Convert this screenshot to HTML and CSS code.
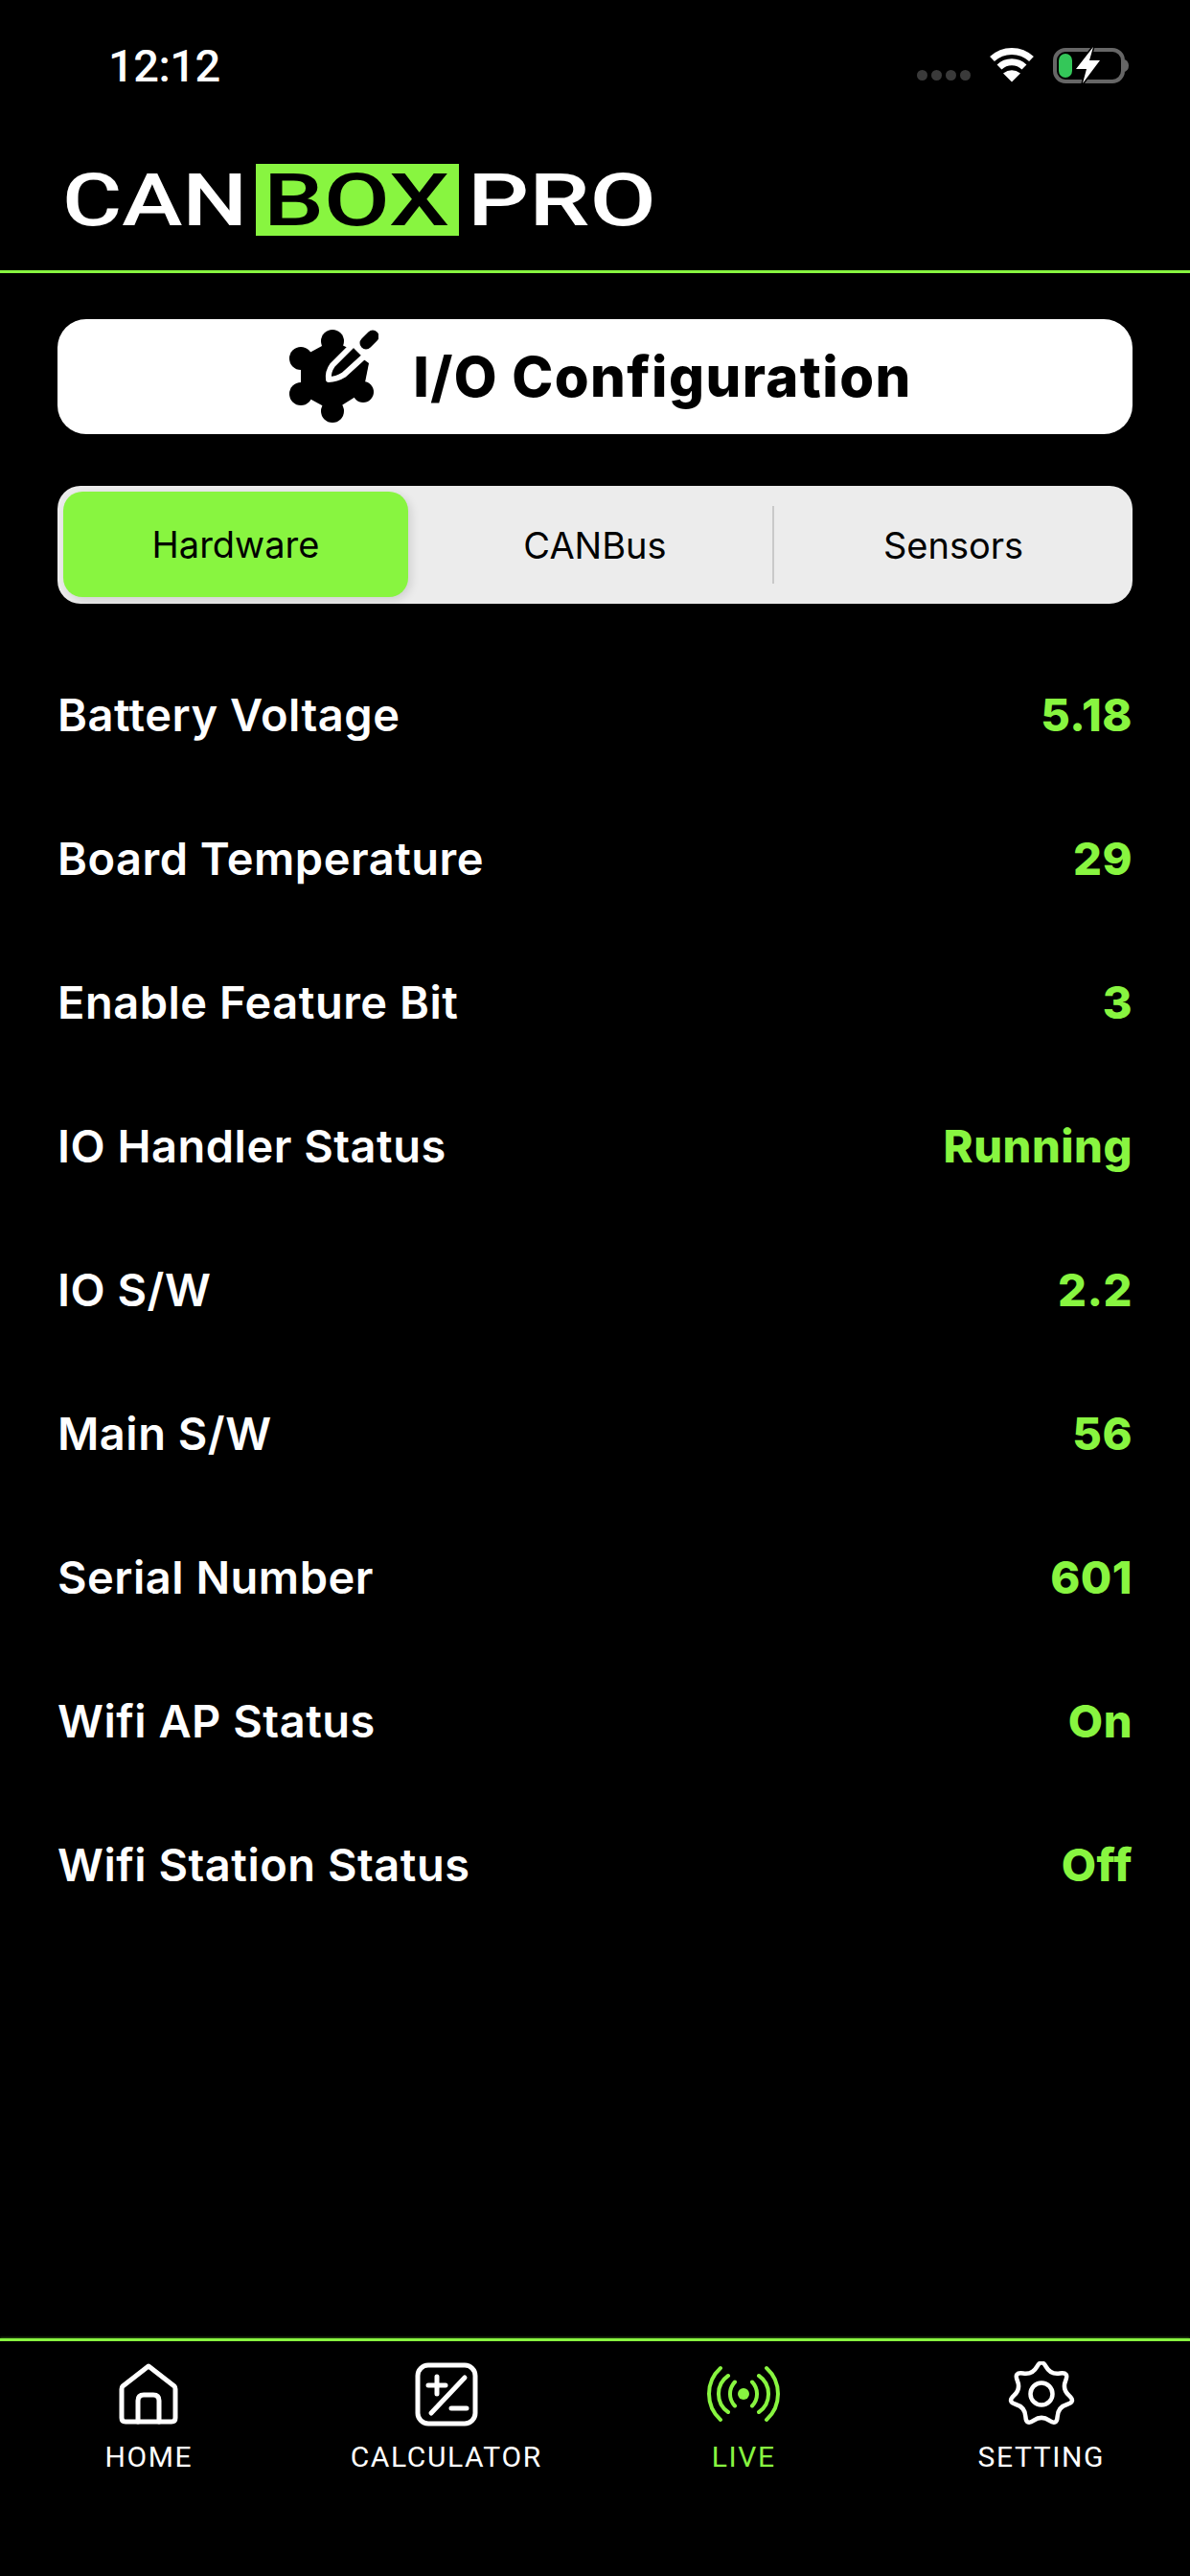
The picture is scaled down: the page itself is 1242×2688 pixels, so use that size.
FILE: index.html
```html
<!DOCTYPE html>
<html lang="en">
<head>
<meta charset="utf-8">
<title>CANBOX PRO</title>
<link rel="stylesheet" href="styles.css">
</head>
<body>
<div class="page">
  <div class="status">
    <span class="time">12:12</span>
    <div class="status-icons">
      <div class="dots"><i></i><i></i><i></i><i></i></div>
      <svg class="wifi" width="48" height="38" viewBox="0 0 48 38">
        <path d="M3.500 13.500A30 30 0 0 1 44.500 13.500M11 22A18.500 18.500 0 0 1 37 22" fill="none" stroke="#fff" stroke-width="7"/>
        <path d="M24 37.500L15 28.500Q24 22 33 28.500Z" fill="#fff"/>
      </svg>
      <svg class="battery" width="80" height="40" viewBox="0 0 80 40">
        <rect x="2" y="4" width="71" height="33" rx="11" fill="none" stroke="#666" stroke-width="4"/>
        <path d="M75 14Q79 16 79 20.500Q79 25 75 27Z" fill="#666"/>
        <rect x="6" y="8" width="14" height="25" rx="7" fill="#34c759"/>
        <polygon points="42,1 24,24 35,24 31,39 49,15 38,15" fill="#fff" stroke="#000" stroke-width="3" paint-order="stroke" stroke-linejoin="round"/>
      </svg>
    </div>
  </div>

  <header class="brand">
    <svg class="logo" width="630" height="100" viewBox="0 0 630 100">
      <rect x="199" y="12" width="212" height="75" fill="#88f540"/>
      <text class="logo-text" x="-3" y="76" textLength="193" lengthAdjust="spacingAndGlyphs" fill="#fff">CAN</text>
      <text class="logo-text" x="207" y="76" textLength="194" lengthAdjust="spacingAndGlyphs" fill="#000">BOX</text>
      <text class="logo-text" x="420" y="76" textLength="197" lengthAdjust="spacingAndGlyphs" fill="#fff">PRO</text>
    </svg>
  </header>

  <main class="content">
    <div class="title-card">
      <svg class="title-icon" width="96" height="104" viewBox="0 0 96 104">
        <g fill="#000">
          <polygon points="48,14 64,22 86,38 80,68 48,88 15,70 15,32"/>
          <circle cx="48" cy="15" r="12"/>
          <circle cx="15" cy="33" r="12"/>
          <circle cx="15" cy="70" r="12"/>
          <circle cx="48" cy="88" r="12"/>
          <circle cx="80" cy="68" r="11"/>
        </g>
        <path d="M66 8L96 38L96 0Z" fill="#fff"/>
        <path d="M70 18L82 30L60 50Q52 55 44 55Q43 47 48 40Z" fill="#000" stroke="#fff" stroke-width="6" stroke-linejoin="round"/>
        <path d="M83 17L90 10" stroke="#000" stroke-width="13" stroke-linecap="round"/>
      </svg>
      <span class="title-text">I/O Configuration</span>
    </div>

    <div class="segments">
      <div class="segment segment-on"><span class="segment-pill">Hardware</span></div>
      <div class="segment segment-rule"><span>CANBus</span></div>
      <div class="segment"><span>Sensors</span></div>
    </div>

    <div class="rows">
      <div class="row"><span class="row-label">Battery Voltage</span><span class="row-value">5.18</span></div>
      <div class="row"><span class="row-label">Board Temperature</span><span class="row-value">29</span></div>
      <div class="row"><span class="row-label">Enable Feature Bit</span><span class="row-value">3</span></div>
      <div class="row"><span class="row-label">IO Handler Status</span><span class="row-value">Running</span></div>
      <div class="row"><span class="row-label">IO S/W</span><span class="row-value">2.2</span></div>
      <div class="row"><span class="row-label">Main S/W</span><span class="row-value">56</span></div>
      <div class="row"><span class="row-label">Serial Number</span><span class="row-value">601</span></div>
      <div class="row"><span class="row-label">Wifi AP Status</span><span class="row-value">On</span></div>
      <div class="row"><span class="row-label">Wifi Station Status</span><span class="row-value">Off</span></div>
    </div>
  </main>

  <nav class="tabs">
    <div class="tab">
      <svg class="tab-icon" width="84" height="68" viewBox="0 0 84 68" fill="none" stroke="#fff" stroke-width="5" stroke-linejoin="round" stroke-linecap="round">
        <path d="M42 5L69 26Q70 27 70 29V59Q70 63 66 63H18Q14 63 14 59V29Q14 27 15 26Z"/>
        <path d="M31 63V41Q31 35 37 35H47Q53 35 53 41V63"/>
      </svg>
      <span>HOME</span>
    </div>
    <div class="tab">
      <svg class="tab-icon" width="84" height="68" viewBox="0 0 84 68" fill="none" stroke="#fff" stroke-width="5" stroke-linecap="round">
        <rect x="12" y="4" width="60" height="61" rx="11"/>
        <path d="M23 25H41M32 16V34M26 54L61 17M47 49H63"/>
      </svg>
      <span>CALCULATOR</span>
    </div>
    <div class="tab tab-on">
      <svg class="tab-icon" width="84" height="68" viewBox="0 0 84 68" fill="none" stroke="#88f540" stroke-width="4" stroke-linecap="round">
        <circle cx="42" cy="34" r="6" fill="#88f540" stroke="none"/>
        <path d="M18 7A36.400 36.400 0 0 0 18 61M66 7A36.400 36.400 0 0 1 66 61"/>
        <path d="M26 15A23 23 0 0 0 26 53M58 15A23 23 0 0 1 58 53"/>
        <path d="M33 21.500A18 18 0 0 0 33 46.500M51 21.500A18 18 0 0 1 51 46.500"/>
      </svg>
      <span>LIVE</span>
    </div>
    <div class="tab">
      <svg class="tab-icon" width="84" height="68" viewBox="-8 0 84 68" fill="none" stroke="#fff" stroke-width="4.500" stroke-linejoin="round">
        <path d="M29.230 5.590Q34 -3 38.780 5.590Q43.550 14.180 53.240 12.560Q62.930 10.930 59.190 20.020Q55.450 29.100 62.760 35.670Q70.070 42.230 60.640 44.980Q51.200 47.720 50.630 57.530Q50.050 67.340 42.030 61.670Q34 56 25.970 61.670Q17.950 67.340 17.380 57.530Q16.800 47.720 7.370 44.980Q-2.070 42.230 5.240 35.670Q12.550 29.100 8.810 20.020Q5.070 10.930 14.760 12.560Q24.450 14.180 29.230 5.590Z"/>
        <circle cx="34" cy="34" r="11.500"/>
      </svg>
      <span>SETTING</span>
    </div>
  </nav>
</div>
</body>
</html>
```

FILE: styles.css
```css
* { box-sizing: border-box; }

html, body {
  margin: 0;
  background: #000;
}

.page {
  width: 1242px;
  height: 2688px;
  display: flex;
  flex-direction: column;
  background: #000;
  font-family: Inter, "Liberation Sans", sans-serif;
  color: #fff;
  overflow: hidden;
}

.status {
  height: 136px;
  flex: none;
  display: flex;
  align-items: center;
  justify-content: space-between;
  padding: 0 63px 0 113px;
}

.time {
  font-family: Roboto, sans-serif;
  font-weight: 500;
  font-size: 47px;
  letter-spacing: -0.5px;
  line-height: 1;
}

.status-icons {
  display: flex;
  align-items: flex-start;
}

.dots {
  display: flex;
  gap: 4px;
  margin-top: 25px;
  margin-right: 19px;
}

.dots i {
  width: 11px;
  height: 11px;
  border-radius: 50%;
  background: #3a3a3a;
}

.wifi { margin-right: 19px; }

.brand {
  height: 149px;
  flex: none;
  padding: 0 0 0 68px;
  display: flex;
  align-items: center;
  border-bottom: 3px solid #88f540;
}

.logo {
  display: block;
  overflow: visible;
}

.logo-text {
  font-family: Roboto, sans-serif;
  font-weight: 500;
  font-size: 76px;
}

.content {
  flex: 1;
  padding: 48px 60px 0;
}

.title-card {
  height: 120px;
  background: #fff;
  border-radius: 30px;
  display: flex;
  align-items: center;
  justify-content: center;
  gap: 36px;
  padding-left: 9px;
  color: #000;
}

.title-text {
  font-weight: 800;
  font-size: 58px;
  letter-spacing: 1.4px;
}

.segments {
  margin-top: 54px;
  height: 123px;
  background: #ececec;
  border-radius: 24px;
  display: grid;
  grid-template-columns: repeat(3, 1fr);
  font-size: 38px;
  line-height: 44px;
  color: #000;
}

.segment {
  display: flex;
  align-items: center;
  justify-content: center;
  position: relative;
}

.segment-on { padding: 6px 8px 7px 6px; }

.segment-pill {
  width: 100%;
  height: 100%;
  display: flex;
  align-items: center;
  justify-content: center;
  background: #88f540;
  border-radius: 20px;
  box-shadow: 3px 3px 10px rgba(0, 0, 0, 0.12);
}

.segment-rule::after {
  content: "";
  position: absolute;
  right: 0;
  top: 21px;
  bottom: 21px;
  width: 2px;
  background: #c9c9c9;
}

.rows {
  margin-top: 40px;
}

.row {
  height: 150px;
  display: flex;
  align-items: center;
  justify-content: space-between;
  font-size: 47px;
  letter-spacing: 0.5px;
}

.row-label {
  font-weight: 600;
}

.row-value {
  font-weight: 800;
  color: #88f540;
}

.tabs {
  flex: none;
  height: 248px;
  border-top: 3px solid #88f540;
  box-shadow: 0 -1px 2px rgba(136, 245, 64, 0.35);
  display: grid;
  grid-template-columns: repeat(4, 1fr);
  padding-top: 21px;
}

.tab {
  display: flex;
  flex-direction: column;
  align-items: center;
  font-family: Roboto, sans-serif;
  font-size: 30px;
  line-height: 36px;
  letter-spacing: 1.6px;
}

.tab-icon { display: block; margin-bottom: 14px; }

.tab-on { color: #88f540; }
```
